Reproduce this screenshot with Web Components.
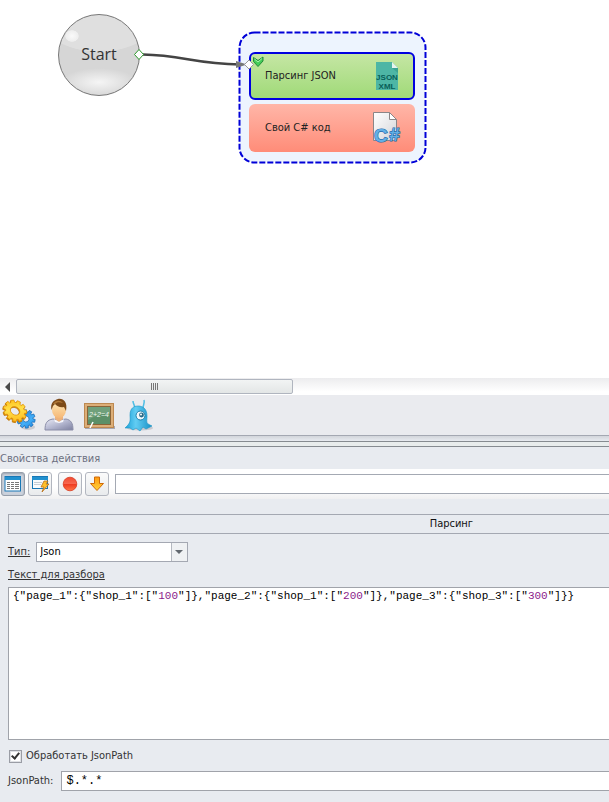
<!DOCTYPE html>
<html lang="ru">
<head>
<meta charset="utf-8">
<title>Свойства действия</title>
<style>
html, body { height: 100%; }
body {
  margin: 0;
  background: #e8ebf0;
  color: #333;
  font: 11px/14px "DejaVu Sans Condensed", "DejaVu Sans", sans-serif;
  overflow: hidden;
}
</style>
</head>
<body>
<app-shell></app-shell>

<script>
const define = (name, html, setup) => {
  const template = document.createElement('template');
  template.innerHTML = html;
  customElements.define(name, class extends HTMLElement {
    constructor() {
      super();
      this.attachShadow({ mode: 'open' }).append(template.content.cloneNode(true));
    }
    connectedCallback() { if (setup) setup(this, this.shadowRoot); }
  });
};

/* Outline of a cog wheel with a given number of teeth */
const cog = (cx, cy, rx, ry, teeth, depth) => {
  const points = [];
  for (let i = 0; i < teeth; i++) {
    [[-.36, 0], [-.24, depth], [.24, depth], [.36, 0]].forEach(([offset, out]) => {
      const angle = (i + offset) / teeth * Math.PI * 2;
      points.push(`${(cx + Math.cos(angle) * (rx + out)).toFixed(1)} ${(cy + Math.sin(angle) * (ry + out)).toFixed(1)}`);
    });
  }
  return `M${points.join('L')}Z`;
};
const hole = (cx, cy, rx, ry) => `M${cx - rx} ${cy}a${rx} ${ry} 0 1 0 ${rx * 2} 0a${rx} ${ry} 0 1 0 ${-rx * 2} 0Z`;

const icons = {
  gears: `<svg viewBox="0 0 34 34" width="34" height="34">
    <defs><linearGradient id="y" x2="1" y2="1"><stop stop-color="#ffb80c"/><stop offset=".45" stop-color="#ffe04a"/><stop offset="1" stop-color="#ffae10"/></linearGradient>
    <linearGradient id="b" x2="1" y2="1"><stop stop-color="#1470d0"/><stop offset=".6" stop-color="#45b0f8"/><stop offset="1" stop-color="#1a80dc"/></linearGradient></defs>
    <ellipse cx="26" cy="29" rx="7" ry="3" fill="#9a9aa5" opacity=".4"/>
    <g fill-rule="evenodd" stroke-linejoin="round" stroke-width=".7">
      <path d="${cog(24, 21, 7, 7, 10, 2.2)}${hole(24, 21, 3, 3)}" fill="url(#b)" stroke="#1268b4" transform="rotate(12 24 21)"/>
      <path d="${cog(13, 13.8, 10, 8, 11, 2.4)}${hole(13, 13.8, 5, 4)}" fill="#d58200" stroke="#c07400" transform="rotate(32 13 13)"/>
      <path d="${cog(13, 12.800, 10, 8, 11, 2.2)}${hole(13, 12.800, 5, 4)}" fill="url(#y)" stroke="#e09208" transform="rotate(32 13 13)"/>
    </g></svg>`,
  user: `<svg viewBox="0 0 34 34" width="34" height="34">
    <defs><linearGradient id="s" x2="1" y2="1"><stop stop-color="#e9eaf5"/><stop offset=".5" stop-color="#b4b7d0"/><stop offset="1" stop-color="#7d80a0"/></linearGradient>
    <linearGradient id="f" y2="1" x2="0"><stop stop-color="#ffe6b0"/><stop offset="1" stop-color="#f5b878"/></linearGradient></defs>
    <path d="M3 32c0-7 2-10 8-11l6 1 7-1c5 1 7 4 7 11z" fill="url(#s)" stroke="#8b8ea8"/>
    <path d="M13 17h8v4l-4 3-4-3z" fill="#eeb27a"/><path d="M12 21l5 3 5-3-1 3-4 1-4-1z" fill="#f7f7fc"/>
    <ellipse cx="17" cy="12" rx="7" ry="8" fill="url(#f)"/>
    <path d="M9.500 12C8 5 12 2 16 1c5-1 10 3 8 12l-2-4c-4 1-7-1-9-3l-2 2z" fill="#7c4a18"/>
    <path d="M11 6c3-4 7-4 10-1-4-1-6-1-8 1z" fill="#b07838"/></svg>`,
  board: `<svg viewBox="0 0 34 34" width="34" height="34">
    <rect x="3" y="28" width="30" height="3" fill="#a7a8b2"/>
    <rect x="2.500" y="5.500" width="29" height="24" fill="#dcae78" stroke="#bd8850"/>
    <rect x="5.500" y="8.500" width="23" height="18" fill="#5c9068" stroke="#8a6438"/>
    <path d="M6 9h22v7C20 15 12 19 6 22z" fill="#79a783" opacity=".7"/>
    <text x="17" y="19" text-anchor="middle" font-family="Liberation Sans, sans-serif" font-size="7" font-style="italic" fill="#eef6ef">2+2=4</text>
    <path d="M8 30l3-6" stroke="#fff" stroke-width="1.500"/></svg>`,
  alien: `<svg viewBox="0 0 34 34" width="34" height="34">
    <defs><linearGradient id="a" x2="1" y2="0"><stop stop-color="#1ba0d8"/><stop offset=".4" stop-color="#62cdf3"/><stop offset="1" stop-color="#1890c6"/></linearGradient></defs>
    <ellipse cx="18" cy="30" rx="13" ry="2.500" fill="#a5a8b2" opacity=".5"/>
    <path d="M13 11C13 7 11 6 11 3M21 10c0-3 2-5 1-8" fill="none" stroke="#4ebde4" stroke-width="1.500"/>
    <path d="M8 17C8 10 12 8 16 8s9 2 9 10c0 4-1 6 1 8l4 2-4 2-2 1-3-2-3 4-4-3-3 2-3-2-5 0 3-3c3-4 2-6 2-10z" fill="url(#a)" stroke="#1a94c4" stroke-width=".6"/>
    <circle cx="18.500" cy="17.500" r="4.500" fill="#eff8fc" stroke="#1b7fae"/><circle cx="19.500" cy="17" r="2.400" fill="#286a88"/><circle cx="19" cy="16.500" r="1" fill="#fff"/></svg>`,
  table: `<svg viewBox="0 0 18 18" width="18" height="18">
    <rect x="1" y="1.500" width="15.500" height="14.500" fill="#fff" stroke="#1877b5"/><path d="M1 2h15.500v3H1z" fill="#2291cf"/>
    <path d="M3 7.500h3M3 9.500h3M3 11.500h3M3 13.500h3M7 7.500h3M7 9.500h3M7 11.500h3M7 13.500h3M11 7.500h4M11 9.500h4M11 11.500h4M11 13.500h4" stroke="#777"/></svg>`,
  form: `<svg viewBox="0 0 18 18" width="18" height="18">
    <rect x="1.500" y="1.500" width="15" height="12" fill="#f8fbfd" stroke="#1877b5"/><path d="M1 2h16v3H1z" fill="#2291cf"/>
    <path d="M3 7.500h8M3 9.500h7" stroke="#c4cdd5"/>
    <path d="M13 6h4l-2 3h3l-7 8 2-5h-3z" fill="#ffc02a" stroke="#b56c18" stroke-width=".8"/></svg>`,
  record: `<svg viewBox="0 0 18 18" width="18" height="18">
    <defs><linearGradient id="r" x2="0" y2="1"><stop stop-color="#f04a30"/><stop offset=".5" stop-color="#f86850"/><stop offset=".52" stop-color="#ef3a20"/><stop offset="1" stop-color="#ff7848"/></linearGradient></defs>
    <circle cx="9" cy="9" r="6.800" fill="url(#r)" stroke="#d83a20" stroke-width=".8"/></svg>`,
  arrow: `<svg viewBox="0 0 18 18" width="18" height="18">
    <defs><linearGradient id="o" x2="0" y2="1"><stop stop-color="#ff9a10"/><stop offset="1" stop-color="#ffd23a"/></linearGradient></defs>
    <path d="M6.500 2h5v6.500h4L9 15.500 2.500 8.500h4z" fill="url(#o)" stroke="#d06a08" stroke-linejoin="round"/></svg>`,
  json: `<svg viewBox="0 0 34 36" width="34" height="36">
    <path d="M5 4h16l6 6v22H5z" fill="#4db6a5"/><path d="M21 4v6h6z" fill="#e6f4ee"/><path d="M21 10h6v5z" fill="#3ba393"/>
    <g font-family="Liberation Sans, sans-serif" font-weight="700" font-size="8" fill="#075f58" text-anchor="middle"><text x="16" y="22">JSON</text><text x="16" y="31">XML</text></g></svg>`,
  csharp: `<svg viewBox="0 0 34 36" width="34" height="36">
    <defs><linearGradient id="p" x2="1" y2="1"><stop stop-color="#fff"/><stop offset="1" stop-color="#d4d4d8"/></linearGradient></defs>
    <path d="M2.500 2.500h16l7 7v21h-23z" fill="url(#p)" stroke="#8b8587"/><path d="M18.500 2.500v7h7z" fill="#fff" stroke="#8b8587"/>
    <g font-family="Liberation Sans, sans-serif" font-weight="700" fill="#62b0e6" stroke="#2468a8" stroke-width="1.200" paint-order="stroke"><text x="3" y="32" font-size="19">C</text><text x="18" y="31" font-size="19" font-style="italic">#</text></g>
    </svg>`
};

define('svg-icon', `<style>:host{display:block;flex:none}svg{display:block;overflow:visible}</style>`,
  (el, root) => { root.innerHTML += icons[el.getAttribute('name')]; });

/* Round entry point of the flow */
define('start-node', `<style>
  :host{display:grid;place-items:center;box-sizing:border-box;width:82px;height:82px;border:1px solid #777;border-radius:50%;color:#333;
    font:16px/20px "Open Sans",sans-serif;
    background:
      radial-gradient(ellipse 7px 6px at 13px 21px,#fafafa,#eeeeee 90%,transparent),
      radial-gradient(ellipse 38px 14px at 50% 84%,#f5f5f5,transparent),
      radial-gradient(ellipse 60px 37px at 50% 0,#dfdfdf 98%,#d6d6d6);
  }
  span{padding-bottom:2px}
</style><span><slot></slot></span>`);

define('action-card', `<style>
  :host{display:flex;align-items:center;justify-content:space-between;box-sizing:border-box;height:48px;padding:0 10px 0 16px;border-radius:6px;color:#222;
    background:linear-gradient(#ffb6a8,#ff8c78)}
  :host([selected]){background:linear-gradient(#c5e6a4,#a0da78);border:2px solid #0000e0;padding:0 8px 0 14px}
</style><slot></slot><slot name="icon"></slot>`);

define('action-group', `<style>
  :host{display:block;position:relative;box-sizing:border-box;width:189px;padding:21px 12px 12px 11px;}
  .outline{position:absolute;inset:0;width:100%;height:100%;z-index:-1}
  .cards{display:grid;gap:4px}
</style>
<svg class="outline" viewBox="0 0 189 133"><rect x="1.500" y="1.500" width="186" height="130" rx="15" fill="#edf4fe" stroke="#0000d8" stroke-width="2" stroke-dasharray="6 2"/></svg>
<div class="cards"><slot></slot></div>`);

define('flow-canvas', `<style>
  :host{display:block;position:relative;overflow:hidden;background:#fff;z-index:0}
  .links{position:absolute;left:0;top:0;z-index:1}
  start-node{position:absolute;left:58px;top:14px}
  action-group{position:absolute;left:238px;top:31px;z-index:0}
</style>
<start-node>Start</start-node>
<action-group>
  <action-card selected>Парсинг JSON<svg-icon slot="icon" name="json"></svg-icon></action-card>
  <action-card>Свой C# код<svg-icon slot="icon" name="csharp"></svg-icon></action-card>
</action-group>
<svg class="links" width="430" height="170">
  <path d="M143 54.500C182 55 195 64 240 64.500" fill="none" stroke="#444" stroke-width="2.500"/>
  <path d="M236 61l11 3.500-11 3.500z" fill="#777"/>
  <path d="M139 49.500l4.500 5-4.500 5-4.500-5z" fill="#fff" stroke="#2c9a2c"/>
  <path d="M249 60l4.500 4.500L249 69l-4.500-4.500z" fill="#fff" stroke="#999"/>
  <path d="M253.500 57.500l4.500 3 5-3.500v4l-5 5.500-4.500-5z" fill="#44cc58" stroke="#238a38"/><path d="M254.500 59l3.500 3 4-3.500" fill="none" stroke="#a8f0a8"/>
</svg>`);

define('scroll-strip', `<style>
  :host{display:flex;align-items:center;height:17px;background:linear-gradient(#ececee,#fff 80%)}
  button{flex:none;width:16px;height:17px;padding:0;border:0;background:none;display:grid;place-items:center}
  button svg{display:block}
  .thumb{width:277px;height:15px;box-sizing:border-box;border:1px solid #b0b5bf;border-radius:2px;background:linear-gradient(#f2f4f4,#e3e6e6);display:grid;place-items:center}
</style>
<button aria-label="Прокрутить влево"><svg width="10" height="10"><path d="M7 0v10L2 5z" fill="#4a4a4a"/></svg></button>
<div class="thumb"><svg width="8" height="7"><path d="M.500 0v7M2.500 0v7M4.500 0v7M6.500 0v7" stroke="#777"/></svg></div>`);

define('big-toolbar', `<style>
  :host{display:flex;gap:6px;padding:3px 2px;box-sizing:border-box;height:41px;background:#eaebef;border-bottom:1px solid #a4a8b2}
  button{width:34px;height:34px;padding:0;border:0;background:none}
</style>
<button aria-label="Настройки"><svg-icon name="gears"></svg-icon></button>
<button aria-label="Профиль"><svg-icon name="user"></svg-icon></button>
<button aria-label="Доска"><svg-icon name="board"></svg-icon></button>
<button aria-label="Бот"><svg-icon name="alien"></svg-icon></button>`);

define('pane-splitter', `<style>
  :host{display:block;height:11px;box-sizing:border-box;background:linear-gradient(#d2d5db,#e8ebf0 5px,#e8ecec 5px);border-bottom:1px solid #868b90}
  div{height:5px;border-bottom:1px solid #868b90}
</style><div></div>`);

define('tool-button', `<style>
  :host{display:block}
  button{display:grid;place-items:center;width:24px;height:24px;padding:0;border:1px solid #b2b6bf;border-radius:3px;background:linear-gradient(#fbfbfb,#e9ebed)}
  :host([pressed]) button{background:#ccd2dc;border-color:#969eaa;box-shadow:inset 0 1px 2px #9aa3b0}
</style><button><svg-icon></svg-icon></button>`,
  (el, root) => {
    const old = root.querySelector('svg-icon');
    const icon = document.createElement('svg-icon');
    icon.setAttribute('name', el.getAttribute('icon'));
    old.replaceWith(icon);
    root.querySelector('button').setAttribute('aria-label', el.getAttribute('label'));
  });

define('pane-header', `<style>
  h2{margin:0;height:22px;font:inherit;line-height:24px;color:#6c7080}
  .bar{display:flex;align-items:center;height:30px;padding-left:1px;background:linear-gradient(#fff 60%,#f0f0f1)}
  .group{display:flex;gap:3px;margin-right:6px}
  input{flex:1;min-width:0;height:20px;box-sizing:border-box;border:1px solid #a4a9b3;border-right:0;background:#fff;padding:0 4px;font:inherit}
</style>
<h2><slot></slot></h2>
<div class="bar">
  <div class="group"><tool-button pressed icon="table" label="Таблица"></tool-button><tool-button icon="form" label="Форма"></tool-button></div>
  <div class="group"><tool-button icon="record" label="Запись"></tool-button><tool-button icon="arrow" label="Вниз"></tool-button></div>
  <input aria-label="Комментарий">
</div>`);

/* Text area with a coloured layer underneath that follows its value */
define('code-area', `<style>
  :host{display:block}
  label{display:block;line-height:16px;margin-bottom:4px;text-decoration:underline}
  .box{display:grid;height:153px;box-sizing:border-box;border:1px solid #a0a3aa;border-right:0;background:#fff;overflow:hidden}
  pre,textarea{grid-area:1/1;margin:0;padding:1px 4px;border:0;font:11px/14px "Liberation Mono",monospace;white-space:pre;overflow:hidden;color:#000}
  textarea{resize:none;outline:0;background:none;color:transparent;caret-color:#000}
  b{font-weight:400;color:#8b1a8b}
</style>
<label for="t"><slot></slot></label>
<div class="box"><pre aria-hidden="true"></pre><textarea id="t" spellcheck="false"></textarea></div>`,
  (el, root) => {
    const area = root.querySelector('textarea'), pre = root.querySelector('pre');
    const paint = () => {
      pre.replaceChildren(...area.value.split(/(\b\d+\b)/).map((part, i) => {
        if (i % 2 === 0) return part;
        const b = document.createElement('b');
        b.textContent = part;
        return b;
      }));
    };
    area.value = el.getAttribute('value');
    area.addEventListener('input', paint);
    paint();
  });

define('action-form', `<style>
  :host{display:block;padding:15px 0 11px 8px;background:#e8ebf0}
  h3{margin:0 0 8px;height:20px;box-sizing:border-box;padding-left:70%;border:1px solid #a4a8b2;border-right:0;font:inherit;line-height:18px;color:#111}
  .row{display:flex;align-items:center;gap:6px}
  .path{gap:8px}
  .type{margin-bottom:5px}
  .type label{text-decoration:underline}
  .select{display:grid;width:152px}
  select,.select svg{grid-area:1/1}
  select{appearance:none;height:20px;box-sizing:border-box;padding:0 20px 0 3px;border:1px solid #a4a8b2;border-radius:0;background:#fff;color:#000;font:inherit}
  .select svg{justify-self:end;align-self:center;margin-right:1px;pointer-events:none}
  .check{height:14px;margin:9px 0 8px;padding-left:1px;gap:4px}
  input[type=checkbox]{appearance:none;width:13px;height:13px;margin:0;border:1px solid #9a9da5;background:#fff;box-shadow:inset 0 0 0 1px #dfe1e5;display:grid;place-items:center}
  input[type=checkbox]:checked::before{content:"";width:3px;height:6px;border:solid #333;border-width:0 2px 2px 0;transform:rotate(40deg);margin-bottom:2px}
  input[type=text]{flex:1;min-width:0;height:20px;box-sizing:border-box;border:1px solid #a0a3aa;border-right:0;padding:0 4px;background:#fff;color:#000;font:12px/14px "Liberation Mono",monospace}
</style>
<h3>Парсинг</h3>
<div class="row type"><label for="type">Тип:</label>
  <div class="select"><select id="type"><option>Json</option><option>Xml</option></select>
    <svg width="16" height="18"><path d="M0 0h16v18H0z" fill="#eff1f3"/><path d="M.500 0v18" stroke="#b4b8c0"/><path d="M4 7h8l-4 4z" fill="#62686f"/></svg></div></div>
<code-area value='{"page_1":{"shop_1":["100"]},"page_2":{"shop_1":["200"]},"page_3":{"shop_3":["300"]}}'>Текст для разбора</code-area>
<div class="row check"><input type="checkbox" id="use" checked><label for="use">Обработать JsonPath</label></div>
<div class="row path"><label for="path">JsonPath:</label><input type="text" id="path" value="$.*.*"></div>`);

define('app-shell', `<style>
  :host{display:flex;flex-direction:column;min-height:100vh}
  flow-canvas{flex:1;min-height:180px}
</style>
<flow-canvas></flow-canvas>
<scroll-strip></scroll-strip>
<big-toolbar></big-toolbar>
<pane-splitter></pane-splitter>
<pane-header>Свойства действия</pane-header>
<action-form></action-form>`);
</script>
</body>
</html>
